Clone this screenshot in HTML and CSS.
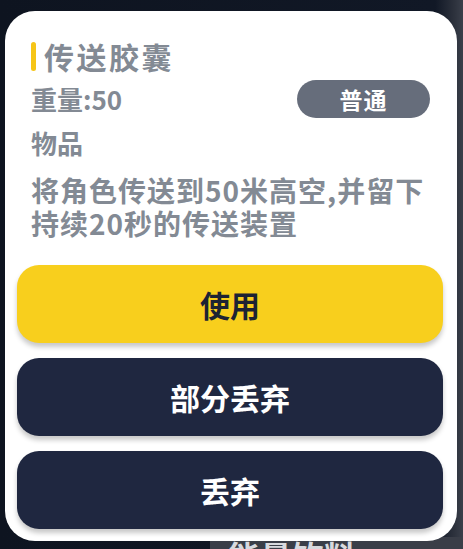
FILE: index.html
```html
<!DOCTYPE html>
<html lang="zh">
<head>
<meta charset="utf-8">
<link rel="stylesheet" href="styles.css">
</head>
<body>
<div class="stage">
  <div class="card">
    <div class="info">
      <div class="title"><span class="bar"></span><span>传送胶囊</span></div>
      <div class="row">
        <span class="weight">重量:50</span>
        <span class="badge">普通</span>
      </div>
      <div class="type">物品</div>
      <div class="desc">将角色传送到50米高空,并留下<br>持续20秒的传送装置</div>
    </div>
    <div class="actions">
      <div class="btn btn-use">使用</div>
      <div class="btn btn-dark">部分丢弃</div>
      <div class="btn btn-dark">丢弃</div>
    </div>
  </div>
  <div class="below"><span class="below-text">能量饮料</span></div>
</div>
</body>
</html>
```

FILE: styles.css
```css
html, body {
  margin: 0;
  padding: 0;
}
body {
  width: 463px;
  height: 549px;
  overflow: hidden;
  background: linear-gradient(90deg, #0e1420 0%, #111826 94%, #2c313c 98%, #3a3f4a 100%);
  font-family: "Noto Sans CJK SC", "Noto Sans", sans-serif;
}
.stage {
  padding-top: 11px;
}
.card {
  margin-left: 5px;
  width: 452px;
  height: 530px;
  box-sizing: border-box;
  background: #ffffff;
  border-radius: 30px;
  padding: 28px 14px 11px 12px;
  display: flex;
  flex-direction: column;
  position: relative;
  z-index: 1;
}
.info {
  padding: 0 13px 0 14px;
  color: #838a94;
  font-weight: 700;
}
.title {
  display: flex;
  align-items: center;
  height: 34px;
  font-size: 30px;
  letter-spacing: 2.5px;
}
.bar {
  width: 5px;
  height: 29px;
  border-radius: 3px;
  background: #f6c517;
  margin-right: 8px;
}
.row {
  margin-top: 7px;
  height: 38px;
  display: flex;
  align-items: center;
  justify-content: space-between;
}
.weight {
  font-size: 26px;
  line-height: 34px;
}
.badge {
  width: 133px;
  height: 38px;
  border-radius: 19px;
  background: #666d7b;
  color: #ffffff;
  font-size: 23px;
  line-height: 38px;
  text-align: center;
  letter-spacing: 1px;
}
.type {
  margin-top: 8px;
  font-size: 26px;
  line-height: 34px;
}
.desc {
  margin-top: 14px;
  font-size: 28px;
  line-height: 33px;
  letter-spacing: 1px;
}
.actions {
  margin-top: 25px;
  display: flex;
  flex-direction: column;
  gap: 15px;
}
.btn {
  height: 78px;
  border-radius: 22px;
  display: flex;
  align-items: center;
  justify-content: center;
  font-size: 30px;
  font-weight: 700;
  box-shadow: 0 4px 5px rgba(0, 0, 0, 0.22);
}
.btn-use {
  background: #f8cf1d;
  color: #1d2333;
}
.btn-dark {
  background: #1f2740;
  color: #ffffff;
}
.below {
  margin-left: 210px;
  height: 30px;
  margin-top: -4px;
  background: #3a3e48;
  overflow: hidden;
  padding-left: 18px;
}
.below-text {
  display: block;
  margin-top: -2px;
  font-size: 32px;
  line-height: 40px;
  color: #d7d9de;
  font-weight: 700;
}
```
